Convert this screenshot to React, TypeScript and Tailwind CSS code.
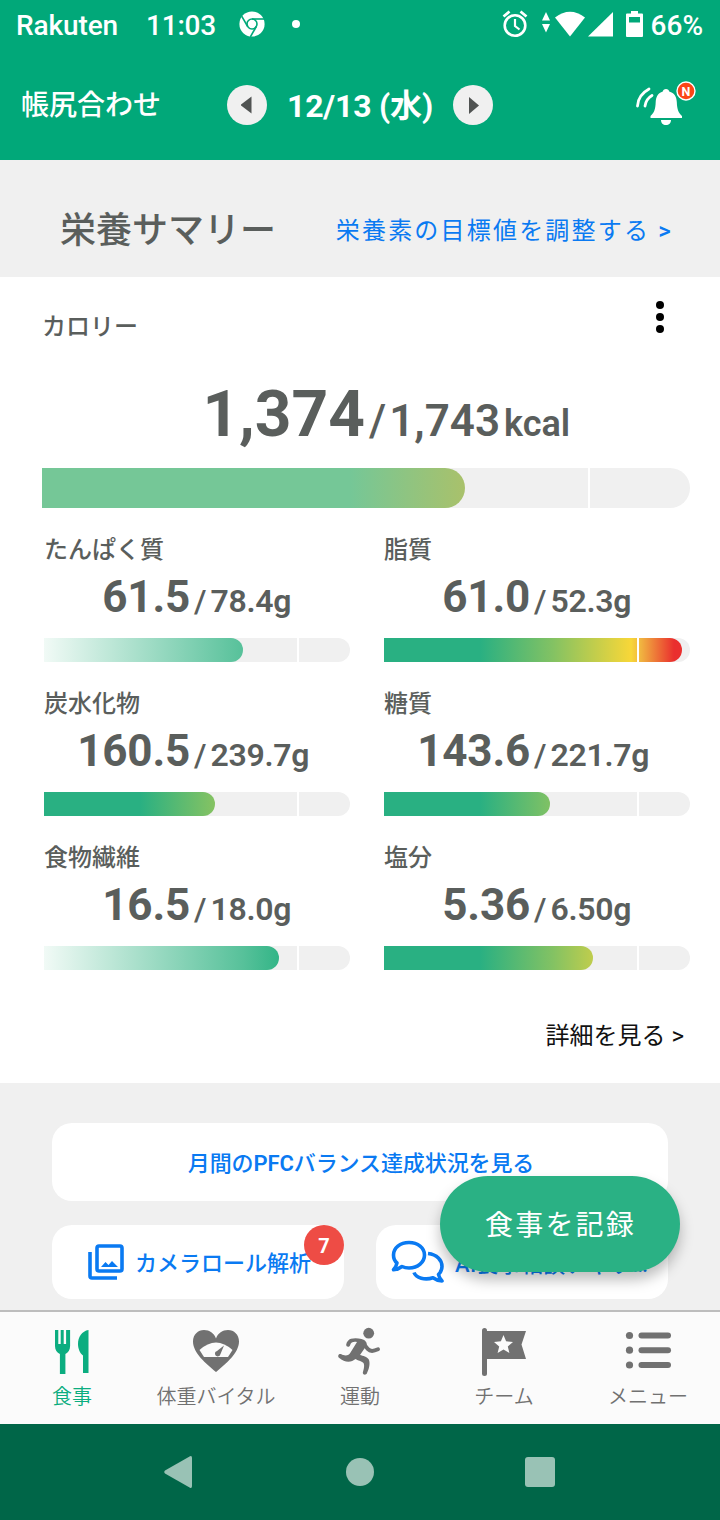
import type { ReactNode } from 'react'

type Nutrient = {
  name: string
  value: string
  target: string
  width: number
  kind: 'limit' | 'reach'
}

const NUTRIENTS: Nutrient[] = [
  { name: 'たんぱく質', value: '61.5', target: '78.4g', width: 199, kind: 'reach' },
  { name: '脂質', value: '61.0', target: '52.3g', width: 298, kind: 'limit' },
  { name: '炭水化物', value: '160.5', target: '239.7g', width: 171, kind: 'limit' },
  { name: '糖質', value: '143.6', target: '221.7g', width: 166, kind: 'limit' },
  { name: '食物繊維', value: '16.5', target: '18.0g', width: 235, kind: 'reach' },
  { name: '塩分', value: '5.36', target: '6.50g', width: 209, kind: 'limit' },
]

const BAR_FILL = {
  limit: 'bg-[linear-gradient(to_right,#29b082_0px,#29b082_96px,#83c263_169px,#f8d738_247px,#f0b340_257px,#ea2f2e_290px)]',
  reach: 'bg-[linear-gradient(to_right,#f1faf6_0px,#57c19a_199px,#33b587_235px)]',
}

function StatusBar() {
  return (
    <div className="flex h-[50px] items-center pl-4 pr-[17px] text-[28px] font-medium">
      <span className="w-[130px] pt-0.5 tracking-[-0.1px]">Rakuten</span>
      <span className="w-[93px] pt-0.5 tracking-[-0.2px]">11:03</span>
      <svg className="mb-0.5 h-[26px] w-[26px]" viewBox="-13 -13 26 26">
        <circle r="12.6" fill="#fff" />
        <g stroke="#01a879" strokeWidth="1.6" fill="none">
          <circle r="5" />
          <path d="M0 -5H12" />
          <path d="M0 -5H12" transform="rotate(120)" />
          <path d="M0 -5H12" transform="rotate(240)" />
        </g>
      </svg>
      <span className="mb-0.5 ml-[27px] h-2 w-2 rounded-full bg-white" />
      <svg className="mb-0.5 ml-auto h-[28px] w-[26px]" viewBox="0 0 26 28" fill="none" stroke="#fff">
        <circle cx="13" cy="15.5" r="10.3" strokeWidth="2.6" />
        <path d="M13 9v7l4.5 3.5" strokeWidth="2.2" />
        <path d="M1.5 6.5l6-5M24.500 6.500l-6-5" strokeWidth="2.8" />
      </svg>
      <svg className="mb-0.5 ml-[13px] h-[26px] w-[72px]" viewBox="0 0 72 26" fill="#fff">
        <path d="M5 1l4 8.500H1zM5 21.500l4-8.500H1z" />
        <path d="M14 6.500Q29 -5 44 6.500L29 25.500z" />
        <path d="M72 1v24.500H47z" />
      </svg>
      <svg className="mb-0.5 ml-[13px] h-[26px] w-[17px]" viewBox="0 0 17 26">
        <path d="M5 0h7v2.500h4a1 1 0 0 1 1 1V25a1 1 0 0 1-1 1H1a1 1 0 0 1-1-1V3.500a1 1 0 0 1 1-1h4z" fill="#fff" />
        <path d="M3 6h11v5.500H3z" fill="#01a879" />
      </svg>
      <span className="ml-2 pt-0.5">66%</span>
    </div>
  )
}

function RoundArrow({ dir }: { dir: 'left' | 'right' }) {
  return (
    <button className="flex h-10 w-10 items-center justify-center rounded-full bg-[#f0f0f0]">
      <svg className="h-[18px] w-3" viewBox="0 0 12 18" fill="#505352">
        <path d={dir === 'left' ? 'M10.500 0.500v17L-.5 9z' : 'M2 1v17L12 9.500z'} />
      </svg>
    </button>
  )
}

function Header() {
  return (
    <header className="h-40 bg-[#01a879] text-white">
      <StatusBar />
      <div className="grid h-[110px] grid-cols-[1fr_auto_1fr] items-center px-[21px]">
        <span className="pt-0.5 text-[28px] font-medium">帳尻合わせ</span>
        <div className="flex w-[266px] items-center justify-between">
          <RoundArrow dir="left" />
          <span className="pt-0.5 text-[32px] font-bold tracking-[-0.2px]">12/13 (水)</span>
          <RoundArrow dir="right" />
        </div>
        <svg className="-mt-0.5 mr-[3px] h-[46px] w-[62px] justify-self-end" viewBox="0 0 62 46">
          <path d="M3.500 25Q4 14 15 8M11 25Q12 18 18 14.500" fill="none" stroke="#fff" strokeWidth="2.8" strokeLinecap="round" />
          <path d="M32 8c1.800 0 3 1 3.200 2.600C40.500 12 42.500 16 42.800 21c.3 8 1.700 10.500 5.200 14v2H16.500v-2c3.500-3.500 4.900-6 5.200-14 .3-5 2.300-9 7.100-10.400C29 9 30.200 8 32 8zM27 39h10c0 3-2 5-5 5s-5-2-5-5z" fill="#fff" />
          <circle cx="52" cy="10" r="9" fill="#fb4517" stroke="#fff" strokeWidth="1.400" />
          <text x="52" y="14.500" textAnchor="middle" fill="#fff" fontSize="12.500" fontWeight="700">N</text>
        </svg>
      </div>
    </header>
  )
}

function NutrientItem({ item }: { item: Nutrient }) {
  return (
    <div className="h-[154px] text-[#5a5e5c]">
      <p className="h-9 pt-0.5 text-2xl leading-9 font-medium">{item.name}</p>
      <div className="flex h-[72px] items-baseline leading-[62px]">
        <span className="w-[146px] text-right text-[44px] font-bold tracking-[-0.2px]">{item.value}</span>
        <span className="ml-1 text-[32px] font-medium">/</span>
        <span className="ml-1 text-[32px] font-semibold tracking-[-0.3px]">{item.target}</span>
      </div>
      <div className="relative h-6 w-[306px] overflow-hidden rounded-r-full bg-[#f0f0f0]">
        <div className={`h-6 rounded-r-full ${BAR_FILL[item.kind]}`} style={{ width: item.width }} />
        <div className="absolute top-0 left-[253px] h-6 w-0.5 bg-white" />
      </div>
    </div>
  )
}

function Summary() {
  return (
    <section className="h-[806px] bg-white">
      <div className="flex h-[100px] items-start justify-between pt-[30px] pr-[56px] pl-[42px]">
        <p className="pt-0.5 text-2xl leading-9 font-medium text-[#5a5e5c]">カロリー</p>
        <div className="-mt-1.5 flex flex-col gap-1">
          <span className="h-2 w-2 rounded-full bg-black" />
          <span className="h-2 w-2 rounded-full bg-black" />
          <span className="h-2 w-2 rounded-full bg-black" />
        </div>
      </div>
      <div className="flex h-[91px] items-baseline pt-px text-[#5a5e5c] leading-[74px]">
        <span className="w-[365px] text-right text-[64px] font-bold">1,374</span>
        <span className="ml-1 text-[44px] font-medium">/</span>
        <span className="ml-[3px] text-[44px] font-semibold">1,743</span>
        <span className="ml-1 text-[36px] font-semibold">kcal</span>
      </div>
      <div className="relative ml-[42px] h-10 w-[648px] overflow-hidden rounded-r-full bg-[#f0f0f0]">
        <div className="h-10 w-[423px] rounded-r-full bg-[linear-gradient(to_right,#75c797_0px,#75c797_308px,#a9c16b_423px)]" />
        <div className="absolute top-0 left-[546px] h-10 w-0.5 bg-white" />
      </div>
      <div className="mt-[22px] ml-11 grid grid-cols-[340px_306px]">
        {NUTRIENTS.map(item => (
          <NutrientItem key={item.name} item={item} />
        ))}
      </div>
      <p className="mt-[26px] pr-9 text-right text-2xl leading-9 text-[#111]">詳細を見る &gt;</p>
    </section>
  )
}

function Actions() {
  return (
    <section className="relative flex h-[227px] flex-col gap-6 px-[52px] pt-10 text-[22px] font-medium text-[#0a7af2]">
      <button className="h-[78px] rounded-[20px] bg-white pt-0.5 pl-0.5 tracking-[-0.1px]">
        月間の<span className="font-semibold">PFC</span>バランス達成状況を見る
      </button>
      <div className="flex h-[74px] gap-8">
        <button className="relative flex w-[292px] items-center rounded-[20px] bg-white pl-9">
          <svg className="h-9 w-9" viewBox="0 0 36 36" fill="none" stroke="#0a7af2" strokeWidth="3.600">
            <rect x="9" y="2" width="25" height="25" rx="2" />
            <path d="M2 8v24a2 2 0 0 0 2 2h25" />
            <path d="M13 23l4.500-5 3 3 3.500-4 6 6z" fill="#0a7af2" stroke="none" />
          </svg>
          <span className="ml-[11px] pt-0.5">カメラロール解析</span>
          <span className="absolute top-0 right-0 flex h-10 w-10 items-center justify-center rounded-full bg-[#ee4c45] pt-0.5 text-xl font-bold text-white">7</span>
        </button>
        <button className="flex w-[292px] items-center rounded-[20px] bg-white pl-[15px]">
          <svg className="h-11 w-[54px] shrink-0" viewBox="0 0 54 44" fill="none" stroke="#0a7af2" strokeWidth="3.600" strokeLinejoin="round">
            <path d="M18 2.500C27 2.500 33.500 8 33.500 15S27 28 18 28c-3 0-5-.5-7-1.500-2.500 2-5.500 3-8.500 3.200C4.500 27.500 5.500 25.500 6 23 3.500 21 2.500 18 2.500 15 2.500 8 9 2.500 18 2.500z" />
            <path d="M37 13.500C46 14.500 51 20 51 26.500c0 3.500-1.500 6-3.500 8 .5 2.500 1.500 4.300 3.500 6.500-3.500 0-6.500-1.500-9-3.300C34 40.500 25 38 23 32.500" />
          </svg>
          <span className="ml-2.5 w-[195px] truncate pt-1 text-left tracking-[0.300px]">AI食事相談チャット</span>
        </button>
      </div>
      <button className="absolute top-[93px] left-[440px] h-24 w-60 rounded-full bg-[#2ab184] pt-1 pl-px text-[28px] font-normal tracking-[2.200px] text-white shadow-[0_8px_14px_rgba(0,0,0,0.260)]">
        食事を記録
      </button>
    </section>
  )
}

function Tab({ label, active, children }: { label: string; active?: boolean; children: ReactNode }) {
  return (
    <div className={`flex flex-col items-center pt-3.5 ${active ? 'text-[#0bad80]' : 'text-[#717171]'}`}>
      <svg className="h-[52px] w-[52px]" viewBox="0 0 52 52" fill="currentColor">
        {children}
      </svg>
      <span className="mt-1 text-[20px] leading-[30px] font-[350]">{label}</span>
    </div>
  )
}

function TabBar() {
  return (
    <nav className="grid h-[114px] grid-cols-5 border-t-2 border-[#bdbdbd] bg-[#fbfbfb]">
      <Tab label="食事" active>
        <path d="M9 4h3.300v14h2.400V4h3v14h2.400V4h4v16c0 4-2 6.500-4.700 8v20h-5.500V28C11 26.500 9 24 9 20z" />
        <path d="M42.500 4v43H37V29.500c-3-2-5-7-5-11.500C32 11 36 5 42.500 4z" />
      </Tab>
      <Tab label="体重バイタル">
        <path d="M26 46C16 37.500 3 27 3 15.500 3 8.500 8 4 14 4c5.500 0 10 3 12 8.500C28 7 32.500 4 38 4c6 0 11 4.500 11 11.500C49 27 36 37.500 26 46z" />
        <path d="M9.500 24Q26 9 42.500 24L38 31H14z" fill="#fbfbfb" />
        <path d="M34 19.500L30.500 28a2.800 2.800 0 1 1-3.500-3z" />
      </Tab>
      <Tab label="運動">
        <circle cx="34.700" cy="7.200" r="5.400" />
        <path d="M17 12.800C20 11.800 24 12 27.500 13c4 1 6 4 5 6.500L26 29c3 1 7 1.500 8.800 4.500 1.700 4 .2 9.500-2 14-.8 1.800-4 1.500-4-.8 1-3.500 2-7.500.7-9.700-1.300-1.700-5-2-8-4-4 3.500-10.500 4-16.500-1.200-1.800-2-.2-4.500 2-3.800 4 2.500 8 1.500 9.500-1.500L23 16c-3-.7-6.300 0-7 3.500-1 2-4 1.500-3.800-1 .5-2.700 2.300-4.900 4.800-5.700z" />
        <path d="M30.500 19L34 23.200Q37 26.500 44 23.300" fill="none" stroke="currentColor" strokeLinecap="round" strokeWidth="4" />
      </Tab>
      <Tab label="チーム">
        <rect x="4" y="2" width="5" height="48" rx="2.500" />
        <path d="M6 5h42l-4.500 13.500L48 33H6z" />
        <path d="M25.500 9l2.600 6.300 6.900.6-5.200 4.500 1.600 6.600-5.900-3.600-5.900 3.600 1.600-6.600-5.200-4.500 6.900-.6z" fill="#fbfbfb" />
      </Tab>
      <Tab label="メニュー">
        <circle cx="7.500" cy="9.500" r="3.600" />
        <circle cx="7.500" cy="24.200" r="3.600" />
        <circle cx="7.500" cy="39" r="3.600" />
        <rect x="16.500" y="6.500" width="32.500" height="6" rx="3" />
        <rect x="16.500" y="21.200" width="32.500" height="6" rx="3" />
        <rect x="16.500" y="36" width="32.500" height="6" rx="3" />
      </Tab>
    </nav>
  )
}

export default function App() {
  return (
    <div className="h-[1520px] w-[720px] overflow-hidden bg-[#f0f0f0] font-['Roboto','Noto_Sans_CJK_JP',sans-serif]" lang="ja">
      <Header />
      <div className="flex h-[117px] items-center justify-between pt-6 pr-[47px] pl-[60px]">
        <h1 className="text-[36px] font-medium text-[#5a5e5c]">栄養サマリー</h1>
        <a className="text-2xl tracking-[2.200px] text-[#0a7af2]">
          栄養素の目標値を調整する <span className="font-medium">&gt;</span>
        </a>
      </div>
      <Summary />
      <Actions />
      <TabBar />
      <div className="flex h-24 items-center justify-center gap-[138px] bg-[#006648] pr-0.5">
        <svg className="h-8 w-7" viewBox="0 0 28 32" fill="#99c2b5">
          <path d="M26 0.300Q28 -.5 28 2V30Q28 32.500 26 31.700L1 17.500Q-.5 16 1 14.500z" />
        </svg>
        <span className="ml-4 h-7 w-7 rounded-full bg-[#99c2b5]" />
        <span className="ml-[13px] h-[30px] w-[30px] rounded-[3px] bg-[#99c2b5]" />
      </div>
    </div>
  )
}
